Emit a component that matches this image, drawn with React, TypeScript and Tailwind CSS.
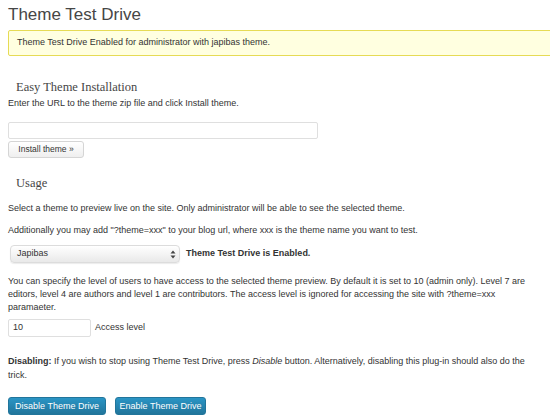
import React from "react";

export default function App() {
  return (
    <div className="w-[550px] h-[420px] overflow-hidden bg-white font-['Liberation_Sans',Arial,sans-serif] text-[9px] text-[#333]">
      <div className="pl-2 pr-1">
        <h2 className="pt-[3px] text-[17px] leading-[24px] text-[#464646]">Theme Test Drive</h2>
        <div className="mt-[3px] -mr-4 h-[26px] flex items-center border border-[#e6db55] bg-[#ffffe0] px-[8px] rounded-[2px]">
          Theme Test Drive Enabled for administrator with japibas theme.
        </div>
        <h3 className="mt-[23px] pl-2 font-['Liberation_Serif',Georgia,serif] text-[12.5px] leading-[16px] text-[#464646]">
          Easy Theme Installation
        </h3>
        <p className="mt-[1px] leading-[14px]">Enter the URL to the theme zip file and click Install theme.</p>
        <div className="mt-[12px] w-[310px] h-[17px] border border-[#dfdfdf] bg-white rounded-[2px]" />
        <button className="mt-[2px] h-[17px] w-[76px] rounded-[3px] border border-[#d5d5d5] bg-gradient-to-b from-white to-[#efefef] text-[8.5px] text-[#333] leading-none">
          Install theme »
        </button>
        <h3 className="mt-[17px] pl-2 font-['Liberation_Serif',Georgia,serif] text-[12.5px] leading-[16px] text-[#464646]">
          Usage
        </h3>
        <p className="mt-[10px] leading-[14px]">
          Select a theme to preview live on the site. Only administrator will be able to see the selected theme.
        </p>
        <p className="mt-[8px] leading-[14px]">
          Additionally you may add "?theme=xxx" to your blog url, where xxx is the theme name you want to test.
        </p>
        <div className="mt-[8px] flex items-center">
          <div className="ml-[2px] w-[170px] h-[18px] flex items-center justify-between rounded-[4px] border border-[#dcdcdc] bg-gradient-to-b from-white to-[#e9e9e9] pl-[6px] pr-[3px] shadow-[0_1px_1px_rgba(0,0,0,0.08)]">
            <span>Japibas</span>
            <svg width="6" height="9" viewBox="0 0 6 9">
              <path d="M3 0.5 L5.5 3.5 H0.5 Z" fill="#444" />
              <path d="M3 8.5 L5.5 5.5 H0.5 Z" fill="#444" />
            </svg>
          </div>
          <span className="ml-[6px] font-bold">Theme Test Drive is Enabled.</span>
        </div>
        <p className="mt-[12px] leading-[13px]">
          You can specify the level of users to have access to the selected theme preview. By default it is set to 10 (admin only). Level 7 are editors, level 4 are authors and level 1 are contributors. The access level is ignored for accessing the site with ?theme=xxx
          <br />
          paramaeter.
        </p>
        <div className="mt-[5px] flex items-center">
          <div className="w-[83px] h-[18px] flex items-center border border-[#dfdfdf] bg-white pl-[4px] rounded-[2px]">10</div>
          <span className="ml-[4px]">Access level</span>
        </div>
        <p className="mt-[17px] leading-[14px]">
          <b>Disabling:</b>
          <span> If you wish to stop using Theme Test Drive, press </span>
          <i>Disable</i>
          <span> button. Alternatively, disabling this plug-in should also do the</span>
          <br />
          <span>trick.</span>
        </p>
        <div className="mt-[15px] flex gap-[9px]">
          <button className="h-[18px] w-[98px] rounded-[3px] border border-[#21759b] bg-gradient-to-b from-[#2a95c5] to-[#21759b] text-[9px] text-white leading-none">
            Disable Theme Drive
          </button>
          <button className="h-[18px] w-[91px] rounded-[3px] border border-[#21759b] bg-gradient-to-b from-[#2a95c5] to-[#21759b] text-[9px] text-white leading-none">
            Enable Theme Drive
          </button>
        </div>
      </div>
    </div>
  );
}
